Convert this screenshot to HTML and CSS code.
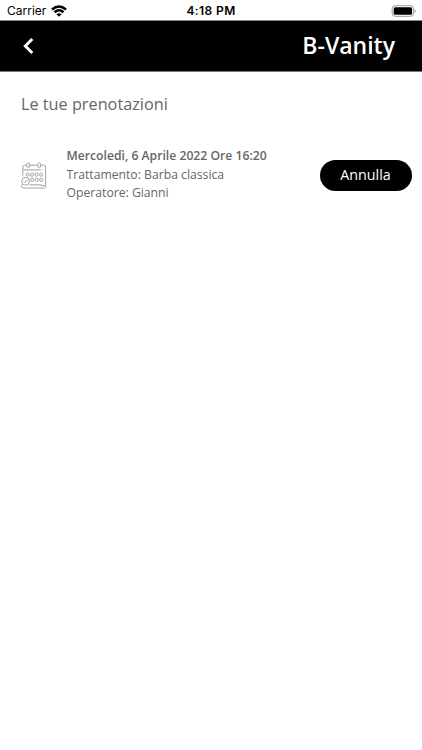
FILE: index.html
```html
<!DOCTYPE html>
<html lang="it">
<head>
<meta charset="utf-8">
<title>B-Vanity</title>
<link rel="stylesheet" href="styles.css">
</head>
<body>
<div class="status">
  <div class="carrier"><span>Carrier</span>
    <svg class="wifi" width="16" height="12" viewBox="0 0 16 12" fill="none" stroke="#000" stroke-width="2.5"><path d="M1 4.5Q8-1.6 15 4.5M3.5 7.3Q8 3.3 12.5 7.3"/><path d="M8 11.7L5.4 9.3Q8 7.2 10.6 9.3Z" fill="#000" stroke="none"/></svg>
  </div>
  <div class="time">4:18 PM</div>
  <svg class="battery" width="25" height="12" viewBox="0 0 25 12"><rect x="1.2" y=".7" width="21.4" height="10.6" rx="3" fill="none" stroke="#999"/><rect x="2.7" y="2.2" width="18.4" height="7.6" rx="1.5"/><path d="M23.8 4.3v3.4q1-.5 1-1.7t-1-1.7" fill="#999"/></svg>
</div>
<header class="bar">
  <svg width="12" height="18" viewBox="0 0 12 18" fill="none" stroke="#fff" stroke-width="2.9"><path d="M10.3 2L3.3 9l7 7"/></svg>
  <div class="brand">B-Vanity</div>
</header>
<main class="content">
  <h1 class="heading">Le tue prenotazioni</h1>
  <section class="booking">
    <svg class="calendar" width="26" height="27" viewBox="0 0 26 27" fill="none" stroke="#929292" stroke-width=".85">
      <path d="M1.8 14.5V5Q1.8 3.2 3.6 3.2H5.8M8.8 3.2H16.8M19.8 3.2H22.8Q24.6 3.2 24.6 5V23.6M2 7.9H20M21.5 7.9H22.5M8.5 22.8H20.5V23.6H24.6V24.4Q24.6 26 23 26H2.3Q.6 26 .6 24.4V22.6"/>
      <rect x="5.9" y="1" width="2.8" height="4.4" rx="1.4"/><rect x="16.9" y="1" width="2.8" height="4.4" rx="1.4"/>
      <circle cx="6.6" cy="12.6" r="1.6"/><circle cx="11.1" cy="12.6" r="1.6"/><circle cx="15.6" cy="12.6" r="1.6"/><circle cx="20.1" cy="12.6" r="1.6"/><circle cx="11.1" cy="17.7" r="1.6"/><circle cx="15.6" cy="17.7" r="1.6"/><circle cx="20.1" cy="17.7" r="1.6"/>
      <circle cx="4.5" cy="19.3" r="3.9"/><path d="M2.5 19.3l1.4 1.4 2.6-2.9"/>
    </svg>
    <div class="details">
      <div class="date">Mercoledì, 6 Aprile 2022 Ore 16:20</div>
      <div class="line">Trattamento: Barba classica</div>
      <div class="line">Operatore: Gianni</div>
    </div>
    <button class="cancel">Annulla</button>
  </section>
</main>
</body>
</html>
```
FILE: styles.css
```css
* { box-sizing: border-box; }
body { margin: 0; background: #fff; color: #666; font-family: "Open Sans", sans-serif; }
.status { display: grid; grid-template-columns: 1fr auto 1fr; align-items: center; height: 20px; padding: 1px 6px 0 7px; color: #000; font: 12px/20px Inter, sans-serif; }
.carrier { display: flex; align-items: center; gap: 5px; }
.time { font-weight: 600; letter-spacing: .4px; margin-right: 1px; }
.battery { justify-self: end; }
.bar { display: flex; justify-content: space-between; align-items: center; height: 52px; padding: 0 27px 0 22px; background: #000; border-bottom: 1px solid #777; border-top: 1px solid #888; color: #fff; }
.brand { font-size: 23px; font-weight: 600; line-height: 48px; padding-bottom: 2px; }
.content { padding: 20px 10px 0 21px; }
.heading { margin: 0; font-size: 16.25px; font-weight: 400; line-height: 24px; }
.booking { display: flex; align-items: center; margin-top: 31px; }
.calendar { flex: none; margin: 2px 19.5px 0 0; }
.details { flex: 1; font-size: 12.2px; line-height: 18.3px; white-space: nowrap; }
.date { font-weight: 600; }
.line { position: relative; top: .4px; }
.cancel { width: 92px; height: 31px; margin-top: 2px; padding: 0 1px 2px 0; border: 0; border-radius: 16px; background: #000; color: #fff; font: 14.3px "Open Sans", sans-serif; }
```
